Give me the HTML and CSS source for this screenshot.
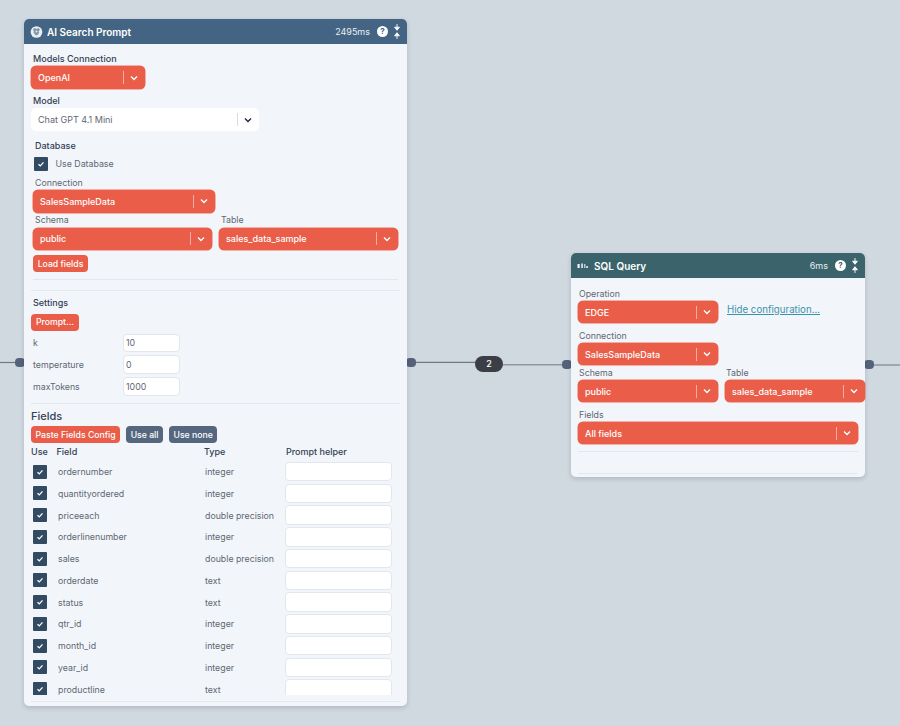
FILE: index.html
```html
<!DOCTYPE html>
<html lang="en">
<head>
<meta charset="utf-8">
<title>Flow</title>
<link rel="stylesheet" href="styles.css">
</head>
<body>
<main class="canvas">
  <svg class="edges" width="900" height="726" viewBox="0 0 900 726">
    <path class="edge" d="M0 362.5H16"/>
    <path class="edge" d="M416 362.3H476"/>
    <path class="edge edge-light" d="M503 364.8H562"/>
    <path class="edge edge-light" d="M874 365H900"/>
  </svg>
  <span class="handle handle-a-l"></span>
  <span class="handle handle-a-r"></span>
  <span class="handle handle-b-l"></span>
  <span class="handle handle-b-r"></span>
  <span class="edge-badge">2</span>

  <section class="node node-ai">
    <header class="node-head head-blue">
      <svg class="head-icon" width="13" height="14" viewBox="0 0 14 14"><circle cx="7" cy="7" r="6.3" fill="#e8eef3"/><path d="M3.500 3.500c1.500-1.300 3-.4 3.600.4.700-.9 2.300-1.300 3.400-.1.200 1.300-.6 2-1.300 2.300.8.800.7 2-.1 2.700L8 10.500H6L4.800 8.800C3.800 8.200 3.500 7 4.300 6 3.500 5.600 3.200 4.500 3.500 3.500z" fill="#7f97ad"/><circle cx="7" cy="6.500" r="1" fill="#e8eef3"/></svg>
      <h2 class="node-title">AI Search Prompt</h2>
      <span class="node-time">2495ms</span>
      <span class="help">?</span>
      <svg class="fold" width="6" height="15" viewBox="0 0 6 15"><path d="M3 0v3M0.600 3.200h4.800L3 6.300zM3 15v-3M0.600 11.800h4.800L3 8.700z" fill="#fff" stroke="#fff" stroke-width="0.900"/></svg>
    </header>
    <div class="node-body">
      <label class="lbl lbl-strong m-9">Models Connection</label>
      <div class="sel sel-red w-114 m-1"><span class="sel-text">OpenAI</span><i class="sep"></i><svg class="chev" viewBox="0 0 8 6"><path d="M1 1.500l3 3 3-3"/></svg></div>
      <label class="lbl lbl-strong m-6">Model</label>
      <div class="sel sel-white w-228 m-1"><span class="sel-text">Chat GPT 4.1 Mini</span><i class="sep"></i><svg class="chev" viewBox="0 0 8 6"><path d="M1 1.500l3 3 3-3"/></svg></div>

      <div class="db">
        <label class="lbl lbl-strong m-9">Database</label>
        <div class="check-row">
          <span class="check"><svg viewBox="0 0 8 8"><path d="M1.500 4.200l1.800 1.700 3.200-3.500"/></svg></span>
          <span class="check-label">Use Database</span>
        </div>
        <label class="lbl m-6">Connection</label>
        <div class="sel sel-red w-182 sel-inset m-1"><span class="sel-text">SalesSampleData</span><i class="sep"></i><svg class="chev" viewBox="0 0 8 6"><path d="M1 1.500l3 3 3-3"/></svg></div>
        <div class="two-col">
          <div>
            <label class="lbl">Schema</label>
            <div class="sel sel-red sel-inset db-sel"><span class="sel-text">public</span><i class="sep"></i><svg class="chev" viewBox="0 0 8 6"><path d="M1 1.500l3 3 3-3"/></svg></div>
          </div>
          <div>
            <label class="lbl">Table</label>
            <div class="sel sel-red sel-inset db-sel"><span class="sel-text">sales_data_sample</span><i class="sep"></i><svg class="chev" viewBox="0 0 8 6"><path d="M1 1.500l3 3 3-3"/></svg></div>
          </div>
        </div>
        <button class="btn btn-red btn-load">Load fields</button>
        <hr class="rule rule-inner">
      </div>
      <hr class="rule rule-b">

      <label class="lbl lbl-strong lbl-settings">Settings</label>
      <button class="btn btn-red btn-prompt">Prompt...</button>
      <div class="setting first"><span>k</span><input class="num" value="10"></div>
      <div class="setting"><span>temperature</span><input class="num" value="0"></div>
      <div class="setting"><span>maxTokens</span><input class="num" value="1000"></div>
      <hr class="rule rule-c">

      <h3 class="fields-title">Fields</h3>
      <div class="btn-row">
        <button class="btn btn-red">Paste Fields Config</button>
        <button class="btn btn-slate">Use all</button>
        <button class="btn btn-slate">Use none</button>
      </div>
      <div class="table">
        <div class="thead"><span>Use</span><span>Field</span><span>Type</span><span>Prompt helper</span></div>
        <div class="trow"><span class="check"><svg viewBox="0 0 8 8"><path d="M1.500 4.200l1.800 1.700 3.200-3.500"/></svg></span><span>ordernumber</span><span>integer</span><input class="helper"></div>
        <div class="trow"><span class="check"><svg viewBox="0 0 8 8"><path d="M1.500 4.200l1.800 1.700 3.200-3.500"/></svg></span><span>quantityordered</span><span>integer</span><input class="helper"></div>
        <div class="trow"><span class="check"><svg viewBox="0 0 8 8"><path d="M1.500 4.200l1.800 1.700 3.200-3.500"/></svg></span><span>priceeach</span><span>double precision</span><input class="helper"></div>
        <div class="trow"><span class="check"><svg viewBox="0 0 8 8"><path d="M1.500 4.200l1.800 1.700 3.200-3.500"/></svg></span><span>orderlinenumber</span><span>integer</span><input class="helper"></div>
        <div class="trow"><span class="check"><svg viewBox="0 0 8 8"><path d="M1.500 4.200l1.800 1.700 3.200-3.500"/></svg></span><span>sales</span><span>double precision</span><input class="helper"></div>
        <div class="trow"><span class="check"><svg viewBox="0 0 8 8"><path d="M1.500 4.200l1.800 1.700 3.200-3.500"/></svg></span><span>orderdate</span><span>text</span><input class="helper"></div>
        <div class="trow"><span class="check"><svg viewBox="0 0 8 8"><path d="M1.500 4.200l1.800 1.700 3.200-3.500"/></svg></span><span>status</span><span>text</span><input class="helper"></div>
        <div class="trow"><span class="check"><svg viewBox="0 0 8 8"><path d="M1.500 4.200l1.800 1.700 3.200-3.500"/></svg></span><span>qtr_id</span><span>integer</span><input class="helper"></div>
        <div class="trow"><span class="check"><svg viewBox="0 0 8 8"><path d="M1.500 4.200l1.800 1.700 3.200-3.500"/></svg></span><span>month_id</span><span>integer</span><input class="helper"></div>
        <div class="trow"><span class="check"><svg viewBox="0 0 8 8"><path d="M1.500 4.200l1.800 1.700 3.200-3.500"/></svg></span><span>year_id</span><span>integer</span><input class="helper"></div>
        <div class="trow"><span class="check"><svg viewBox="0 0 8 8"><path d="M1.500 4.200l1.800 1.700 3.200-3.500"/></svg></span><span>productline</span><span>text</span><input class="helper"></div>
      </div>
      <hr class="rule rule-end">
    </div>
  </section>

  <section class="node node-sql">
    <header class="node-head head-teal">
      <svg class="head-icon sql-icon" width="11" height="6" viewBox="0 0 11 6"><path d="M0.500 1h2.200v4H0.500zM4.300 0.500h1.500v4.500H4.300zM7.300 1h1v4h-1zM9.300 3h1.500v2H9.300z" fill="#f1f5f9"/></svg>
      <h2 class="node-title">SQL Query</h2>
      <span class="node-time">6ms</span>
      <span class="help">?</span>
      <svg class="fold" width="6" height="15" viewBox="0 0 6 15"><path d="M3 0v3M0.600 3.200h4.800L3 6.300zM3 15v-3M0.600 11.800h4.800L3 8.700z" fill="#fff" stroke="#fff" stroke-width="0.900"/></svg>
    </header>
    <div class="node-body sql-body">
      <div class="sql-top">
        <div>
          <label class="lbl">Operation</label>
          <div class="sel sel-red sel-22 m-1"><span class="sel-text">EDGE</span><i class="sep"></i><svg class="chev" viewBox="0 0 8 6"><path d="M1 1.500l3 3 3-3"/></svg></div>
        </div>
        <a class="link" href="#">Hide configuration...</a>
      </div>
      <label class="lbl m-7">Connection</label>
      <div class="sel sel-red sel-22 w-140 m-1"><span class="sel-text">SalesSampleData</span><i class="sep"></i><svg class="chev" viewBox="0 0 8 6"><path d="M1 1.500l3 3 3-3"/></svg></div>
      <div class="two-col sql-two">
        <div>
          <label class="lbl">Schema</label>
          <div class="sel sel-red sel-22 m-1"><span class="sel-text">public</span><i class="sep"></i><svg class="chev" viewBox="0 0 8 6"><path d="M1 1.500l3 3 3-3"/></svg></div>
        </div>
        <div>
          <label class="lbl">Table</label>
          <div class="sel sel-red sel-22 m-1"><span class="sel-text">sales_data_sample</span><i class="sep"></i><svg class="chev" viewBox="0 0 8 6"><path d="M1 1.500l3 3 3-3"/></svg></div>
        </div>
      </div>
      <label class="lbl m-7">Fields</label>
      <div class="sel sel-red sel-22 w-280 m-1"><span class="sel-text">All fields</span><i class="sep"></i><svg class="chev" viewBox="0 0 8 6"><path d="M1 1.500l3 3 3-3"/></svg></div>
      <hr class="rule sql-rule-a">
      <hr class="rule sql-rule-b">
    </div>
  </section>
</main>
</body>
</html>
```
FILE: styles.css
```css
* { box-sizing: border-box; }
html, body { margin: 0; padding: 0; }
body { background: #d0d8e0; font-family: Inter, "Liberation Sans", sans-serif; font-size: 8.800px; color: #5f6773; overflow: hidden; }
.canvas { position: relative; width: 900px; height: 726px; overflow: hidden; }
.edges { position: absolute; left: 0; top: 0; }
.edge { fill: none; stroke: #707883; stroke-width: 1.200; }
.edge-light { stroke: #8d96a2; stroke-width: 1.500; }
.handle { position: absolute; width: 10px; height: 9px; background: #55637a; border-radius: 4px; }
.handle-a-l { left: 15px; top: 358px; }
.handle-a-r { left: 406px; top: 358px; }
.handle-b-l { left: 562px; top: 360px; }
.handle-b-r { left: 864px; top: 360px; }
.edge-badge { position: absolute; left: 475px; top: 356px; width: 28px; height: 16px; border-radius: 8px; background: #3b3f45; color: #fff; font-size: 9px; font-weight: 500; line-height: 16px; text-align: center; }

.node { position: absolute; background: #f2f6fa; border-radius: 5px; box-shadow: 0 2px 5px rgba(15, 23, 42, .16); }
.node-ai { left: 24px; top: 19px; width: 383px; height: 687px; }
.node-sql { left: 571px; top: 253px; width: 294px; height: 224px; }
.node-head { display: flex; align-items: center; height: 25px; padding: 0 7.500px 0 6px; border-radius: 5px 5px 0 0; color: #fff; }
.head-blue { background: #436482; }
.head-teal { background: #3a636b; }
.head-icon { flex: none; margin-right: 4px; }
.sql-icon { margin-right: 6px; }
.node-title { margin: 1px 0 0; flex: 1; font-size: 10px; font-weight: 600; }
.node-time { font-size: 9px; color: #e8eef3; margin-right: 7px; }
.help { width: 11px; height: 11px; border-radius: 50%; background: #fff; color: #436482; font-size: 8px; font-weight: 700; line-height: 11px; text-align: center; margin-right: 5.500px; }
.head-teal .help { color: #3a636b; }
.fold { flex: none; }

.node-body { padding: 0 7px; }
.lbl { display: block; height: 12px; line-height: 12px; font-size: 8.800px; color: #5f6773; }
.lbl-strong { color: #334155; font-size: 9px; font-weight: 500; margin-left: 2px; }
.m-1 { margin-top: 1px; }
.m-6 { margin-top: 6px; }
.m-7 { margin-top: 7px; }
.m-9 { margin-top: 9px; }

.sel { display: flex; align-items: center; height: 23px; border-radius: 5px; padding: 0 7px; }
.sel-22 { height: 22px; }
.sel-inset { height: 22.500px; }
.db-sel { margin-top: 2px; height: 22px; }
.sel-red { background: #e95d49; color: #fff; box-shadow: 0 0 0 .5px #ee6a55; }
.sel-white { background: #fff; color: #5f6773; }
.sel-text { flex: 1; font-size: 9px; font-weight: 500; white-space: nowrap; overflow: hidden; }
.sel-white .sel-text { font-weight: 400; }
.sep { flex: none; width: 1px; height: 13px; background: rgba(255, 255, 255, .5); margin-right: 6px; }
.sel-white .sep { background: #d5dbe3; }
.chev { flex: none; width: 8px; height: 6px; fill: none; stroke: #fff; stroke-width: 1.400; }
.sel-white .chev { stroke: #1e293b; }
.w-114 { width: 114px; }
.w-140 { width: 140px; }
.w-182 { width: 182px; }
.w-228 { width: 228px; }
.w-280 { width: 280px; }

.db { padding: 0 2px; }
.db > .lbl-strong { margin-left: 0; }
.db .lbl { padding-left: 2px; }
.check-row { display: flex; align-items: center; margin-top: 5px; padding-left: 1px; height: 14px; }
.check { display: flex; align-items: center; justify-content: center; flex: none; width: 14px; height: 14px; background: #334a63; border-radius: 1px; }
.check svg { width: 8px; height: 8px; fill: none; stroke: #fff; stroke-width: 1.300; }
.check-label { margin: -1px 0 0 7.500px; }
.two-col { display: grid; grid-template-columns: 179px 179px; column-gap: 7px; margin-top: 1px; }
.btn { display: block; font-family: inherit; font-size: 8.700px; font-weight: 500; height: 17px; padding: 0 4.500px; border: 0; border-radius: 4px; color: #fff; white-space: nowrap; }
.btn-red { background: #e95d49; }
.btn-slate { background: #55677f; }
.btn-load { margin-top: 5.500px; width: 55px; }
.rule { border: 0; height: 1px; background: #e2e7ed; margin: 0; }
.rule-inner { margin-top: 7px; }
.rule-b { margin-top: 9.500px; }
.lbl-settings { margin-top: 6px; }
.btn-prompt { margin-top: 5px; width: 48px; }
.setting { display: grid; grid-template-columns: 90px 57px; align-items: center; padding-left: 2px; margin-top: 3px; height: 18.700px; }
.num { width: 57px; height: 18.700px; border: 1px solid #e2e7ed; border-radius: 4px; background: #fff; padding: 0 2px; font: 400 8.800px Inter, "Liberation Sans", sans-serif; color: #5f6773; }
.rule-c { margin-top: 7.500px; }
.fields-title { margin: 6px 0 0; font-size: 11px; line-height: 13px; font-weight: 500; color: #334155; }
.btn-row { display: flex; gap: 6px; margin-top: 3px; }
.table { height: 249px; overflow: hidden; margin-top: 3px; }
.thead { display: grid; grid-template-columns: 25.500px 147.500px 82px auto; height: 12px; line-height: 12px; margin-bottom: 2.600px; font-size: 9px; font-weight: 500; color: #334155; }
.trow { display: grid; grid-template-columns: 25px 147px 80px 107px; align-items: center; height: 21.750px; padding-left: 2px; }
.helper { width: 107px; height: 19.500px; border: 1px solid #e2e7ed; border-radius: 4px; background: #fff; }
.rule-end { margin-top: 6px; }

.sql-top { display: grid; grid-template-columns: 140px auto; column-gap: 9px; padding-top: 10px; align-items: start; }
.sql-top .lbl, .sql-body > .lbl, .sql-two .lbl { padding-left: 1px; }
.link { margin-top: 16px; color: #3b93ab; font-size: 9.700px; line-height: 12px; }
.sql-two { grid-template-columns: 140px 140px; margin-top: 1.500px; }
.sql-two .sel { margin-top: 1.500px; }
.sql-rule-a { margin-top: 7px; width: 280px; }
.sql-rule-b { margin-top: 21px; width: 280px; }
```
